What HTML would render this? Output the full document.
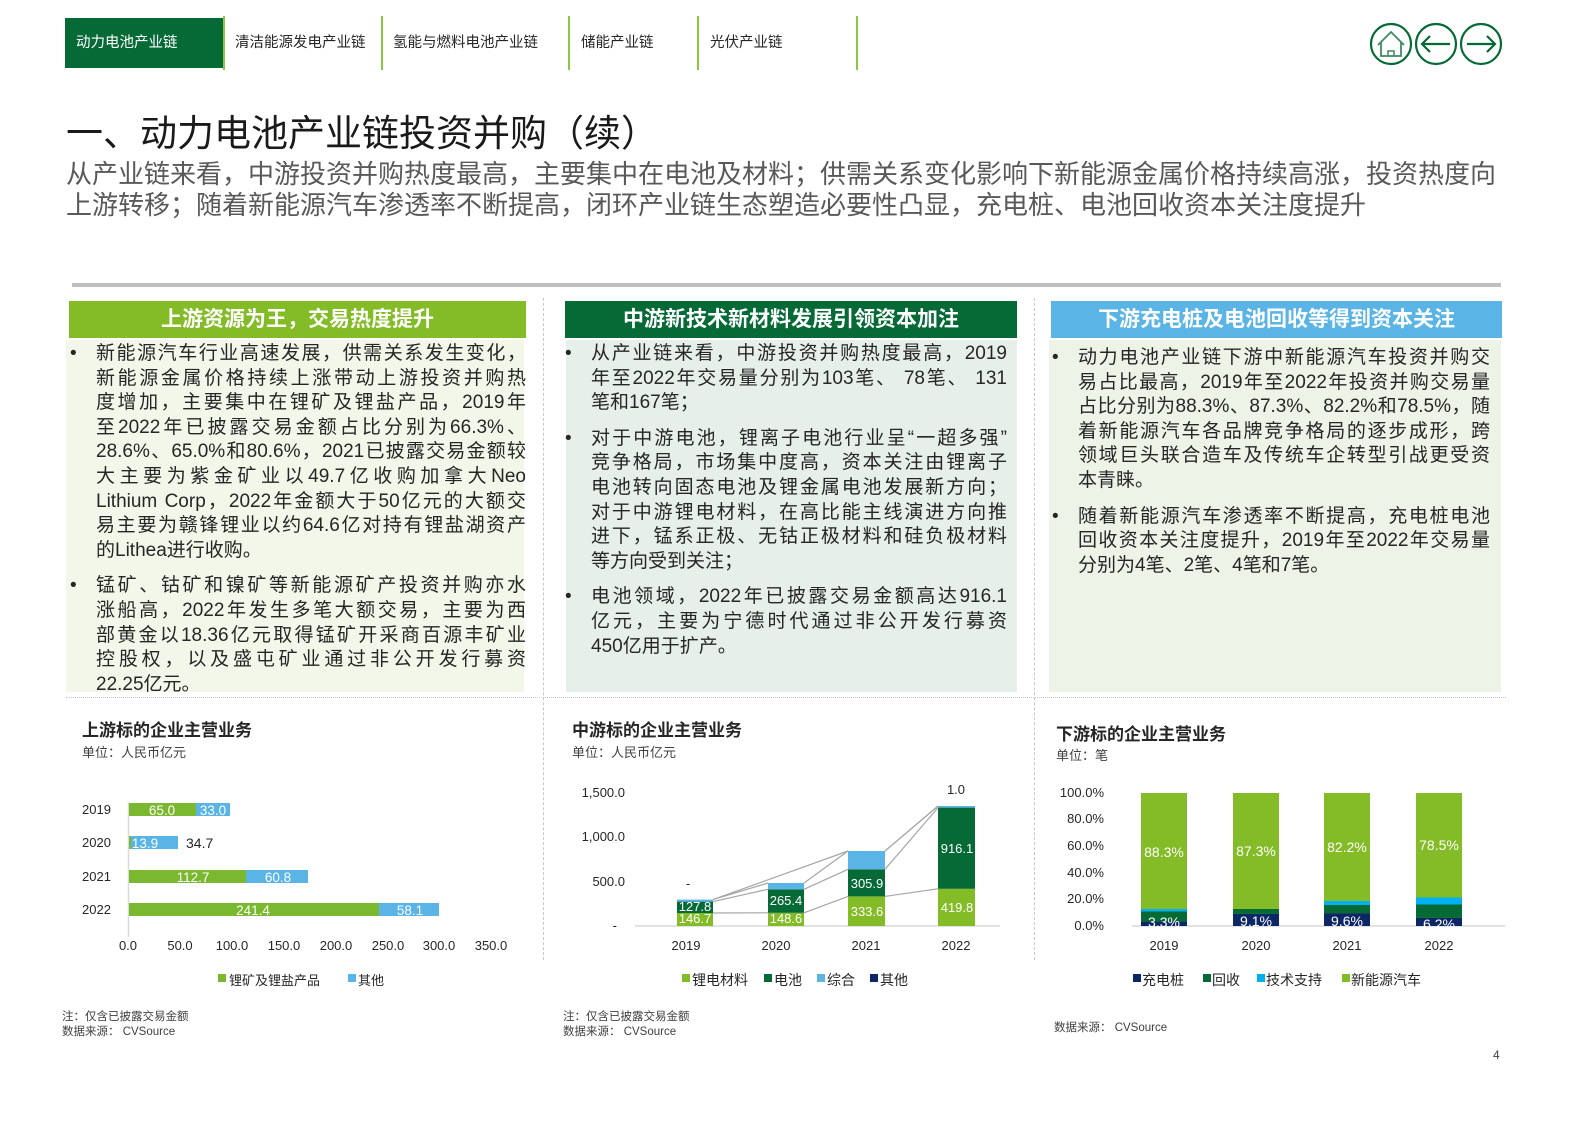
<!DOCTYPE html>
<html><head><meta charset="utf-8">
<style>
*{margin:0;padding:0;box-sizing:border-box}
body{width:1587px;height:1122px;background:#fff;position:relative;overflow:hidden;font-family:"Liberation Sans","Noto Sans CJK SC",sans-serif;color:#262626}
.abs{position:absolute}
.tab{position:absolute;top:18px;height:50px;line-height:50px;font-size:14.5px;color:#262626;padding-left:11px}
.sep{position:absolute;top:16px;height:54px;width:2px;background:#8dc63f}
.hdr{position:absolute;top:301px;height:37px;line-height:37px;color:#fff;font-size:21px;font-weight:bold;text-align:center}
.panel{position:absolute;top:340px;height:352px}
.txt{position:absolute;font-size:19px;line-height:24.6px;color:#262626}
.txt div{text-align:justify;text-align-last:justify;white-space:nowrap}
.txt div.l{text-align-last:left}
.txt .para{margin-bottom:11px;position:relative}
.txt .para::before{content:"•";position:absolute;left:-26px;top:0}
.ct{position:absolute;font-size:17px;font-weight:bold;color:#262626}
.unit{position:absolute;font-size:13px;color:#404040}
.note{position:absolute;font-size:11.5px;color:#404040;line-height:15px}
</style></head><body>

<div class="abs" style="left:65px;top:18px;width:158px;height:50px;background:#066a37"></div>
<div class="tab" style="left:65px;color:#fff">动力电池产业链</div>
<div class="tab" style="left:224px">清洁能源发电产业链</div>
<div class="tab" style="left:382px">氢能与燃料电池产业链</div>
<div class="tab" style="left:570px">储能产业链</div>
<div class="tab" style="left:699px">光伏产业链</div>
<div class="sep" style="left:223px"></div>
<div class="sep" style="left:381px"></div>
<div class="sep" style="left:568px"></div>
<div class="sep" style="left:697px"></div>
<div class="sep" style="left:856px"></div>

<svg class="abs" style="left:1366px;top:19px" width="140" height="50" viewBox="0 0 140 50">
<g fill="none" stroke="#066a37" stroke-width="2.2">
<circle cx="25" cy="25" r="20"/><circle cx="70" cy="25" r="20"/><circle cx="115" cy="25" r="20"/>
<path d="M12 26 L25 13 L38 26 M15 23 V37 H35 V23" stroke="#3f8a60" stroke-width="1.8"/>
<path d="M22 37 V32 H28 V37" stroke="#3f8a60" stroke-width="1.5"/>
<path d="M56 25 H84 M64 17 L56 25 L64 33"/>
<path d="M101 25 H129 M121 17 L129 25 L121 33"/>
</g></svg>

<div class="abs" style="left:66px;top:103px;font-size:37px;color:#1a1a1a">一、动力电池产业链投资并购（续）</div>
<div class="abs" style="left:66px;top:159px;font-size:26px;line-height:31px;color:#595959;white-space:nowrap">从产业链来看，中游投资并购热度最高，主要集中在电池及材料；供需关系变化影响下新能源金属价格持续高涨，投资热度向<br>上游转移；随着新能源汽车渗透率不断提高，闭环产业链生态塑造必要性凸显，充电桩、电池回收资本关注度提升</div>

<div class="abs" style="left:72px;top:283px;width:1429px;height:4px;background:#bfbfbf"></div>

<div class="abs" style="left:543px;top:298px;height:662px;border-left:1.5px dashed #c8c8c8"></div>
<div class="abs" style="left:1034px;top:298px;height:662px;border-left:1.5px dashed #c8c8c8"></div>
<div class="abs" style="left:66px;top:697px;width:1440px;border-top:1px dotted #c8c8c8"></div>

<div class="hdr" style="left:69px;width:457px;background:#84bc27">上游资源为王，交易热度提升</div>
<div class="hdr" style="left:565px;width:452px;background:#066a37">中游新技术新材料发展引领资本加注</div>
<div class="hdr" style="left:1051px;width:451px;background:#5ab4e5">下游充电桩及电池回收等得到资本关注</div>

<div class="panel" style="left:66px;width:458px;background:#f2f7ea"></div>
<div class="panel" style="left:566px;width:451px;background:#e6efe9"></div>
<div class="panel" style="left:1049px;width:452px;background:#eef3e8"></div>

<div class="txt" style="left:96px;top:342px;width:430px">
<div class="para"><div>新能源汽车行业高速发展，供需关系发生变化，</div><div>新能源金属价格持续上涨带动上游投资并购热</div><div>度增加，主要集中在锂矿及锂盐产品，2019年</div><div>至2022年已披露交易金额占比分别为66.3%、</div><div>28.6%、65.0%和80.6%，2021已披露交易金额较</div><div>大主要为紫金矿业以49.7亿收购加拿大Neo</div><div>Lithium Corp，2022年金额大于50亿元的大额交</div><div>易主要为赣锋锂业以约64.6亿对持有锂盐湖资产</div><div class="l">的Lithea进行收购。</div></div>
<div class="para"><div>锰矿、钴矿和镍矿等新能源矿产投资并购亦水</div><div>涨船高，2022年发生多笔大额交易，主要为西</div><div>部黄金以18.36亿元取得锰矿开采商百源丰矿业</div><div>控股权，以及盛屯矿业通过非公开发行募资</div><div class="l">22.25亿元。</div></div>
</div>

<div class="txt" style="left:591px;top:342px;width:416px">
<div class="para"><div>从产业链来看，中游投资并购热度最高，2019</div><div>年至2022年交易量分别为103笔、 78笔、 131</div><div class="l">笔和167笔；</div></div>
<div class="para"><div>对于中游电池，锂离子电池行业呈“一超多强”</div><div>竞争格局，市场集中度高，资本关注由锂离子</div><div>电池转向固态电池及锂金属电池发展新方向；</div><div>对于中游锂电材料，在高比能主线演进方向推</div><div>进下，锰系正极、无钴正极材料和硅负极材料</div><div class="l">等方向受到关注；</div></div>
<div class="para"><div>电池领域，2022年已披露交易金额高达916.1</div><div>亿元，主要为宁德时代通过非公开发行募资</div><div class="l">450亿用于扩产。</div></div>
</div>

<div class="txt" style="left:1078px;top:346px;width:412px">
<div class="para"><div>动力电池产业链下游中新能源汽车投资并购交</div><div>易占比最高，2019年至2022年投资并购交易量</div><div>占比分别为88.3%、87.3%、82.2%和78.5%，随</div><div>着新能源汽车各品牌竞争格局的逐步成形，跨</div><div>领域巨头联合造车及传统车企转型引战更受资</div><div class="l">本青睐。</div></div>
<div class="para"><div>随着新能源汽车渗透率不断提高，充电桩电池</div><div>回收资本关注度提升，2019年至2022年交易量</div><div class="l">分别为4笔、2笔、4笔和7笔。</div></div>
</div>

<!-- left chart -->
<div class="ct" style="left:82px;top:716px">上游标的企业主营业务</div>
<div class="unit" style="left:82px;top:742px">单位：人民币亿元</div>
<svg class="abs" style="left:0;top:780px" width="545" height="220" font-family="Liberation Sans" font-size="13">
<line x1="128.5" y1="22" x2="128.5" y2="157" stroke="#d9d9d9" stroke-width="1.5"/>
<g fill="#262626" font-size="13"><text x="82" y="34">2019</text><text x="82" y="67">2020</text><text x="82" y="101">2021</text><text x="82" y="134">2022</text></g>
<rect x="129" y="23" width="67" height="13" fill="#7ab830"/><rect x="196" y="23" width="34" height="13" fill="#5ab4e5"/>
<rect x="129" y="56" width="14" height="13" fill="#7ab830"/><rect x="131" y="56" width="47" height="13" fill="#5ab4e5"/>
<rect x="129" y="90" width="117" height="13" fill="#7ab830"/><rect x="246" y="90" width="62" height="13" fill="#5ab4e5"/>
<rect x="129" y="123" width="250" height="13" fill="#7ab830"/><rect x="379" y="123" width="60" height="13" fill="#5ab4e5"/>
<g fill="#fff" font-size="13.5" text-anchor="middle"><text x="162" y="35">65.0</text><text x="213" y="35">33.0</text><text x="145" y="68">13.9</text><text x="193" y="102">112.7</text><text x="278" y="102">60.8</text><text x="253" y="135">241.4</text><text x="410" y="135">58.1</text></g>
<text x="186" y="68" fill="#262626" font-size="14">34.7</text>
<g fill="#262626" text-anchor="middle"><text x="128" y="170">0.0</text><text x="180" y="170">50.0</text><text x="232" y="170">100.0</text><text x="284" y="170">150.0</text><text x="336" y="170">200.0</text><text x="388" y="170">250.0</text><text x="439" y="170">300.0</text><text x="491" y="170">350.0</text></g>
<rect x="218" y="194" width="8" height="8" fill="#7ab830"/><text x="229" y="205" fill="#262626" font-family="Liberation Sans,Noto Sans CJK SC">锂矿及锂盐产品</text>
<rect x="348" y="194" width="8" height="8" fill="#5ab4e5"/><text x="358" y="205" fill="#262626" font-family="Liberation Sans,Noto Sans CJK SC">其他</text>
</svg>
<div class="note" style="left:62px;top:1010px">注：仅含已披露交易金额<br>数据来源： CVSource</div>

<!-- middle chart -->
<div class="ct" style="left:572px;top:716px">中游标的企业主营业务</div>
<div class="unit" style="left:572px;top:742px">单位：人民币亿元</div>
<svg class="abs" style="left:545px;top:770px" width="490" height="230" font-family="Liberation Sans" font-size="13">
<g fill="#262626" text-anchor="end"><text x="80" y="27">1,500.0</text><text x="80" y="71">1,000.0</text><text x="80" y="116">500.0</text><text x="72" y="160">-</text></g>
<line x1="90" y1="156" x2="455" y2="156" stroke="#d9d9d9" stroke-width="1.5"/>
<rect x="132" y="143" width="36" height="13" fill="#84bc27"/><rect x="132" y="131.6" width="36" height="11.4" fill="#066a37"/><rect x="132" y="129.6" width="36" height="2" fill="#5ab4e5"/>
<rect x="223" y="142.8" width="36" height="13.2" fill="#84bc27"/><rect x="223" y="119.3" width="36" height="23.5" fill="#066a37"/><rect x="223" y="113" width="36" height="6.3" fill="#5ab4e5"/>
<rect x="303" y="126.4" width="37" height="29.6" fill="#84bc27"/><rect x="303" y="99.3" width="37" height="27.1" fill="#066a37"/><rect x="303" y="81" width="37" height="18.3" fill="#5ab4e5"/>
<rect x="393" y="118.8" width="37" height="37.2" fill="#84bc27"/><rect x="393" y="37.6" width="37" height="81.2" fill="#066a37"/><rect x="393" y="36" width="37" height="1.6" fill="#5ab4e5"/>
<g stroke="#a6a6a6" stroke-width="1.2" fill="none">
<path d="M168 143 L223 142.8 M259 142.8 L303 126.4 M340 126.4 L393 118.8"/>
<path d="M168 131.6 L223 119.3 M259 119.3 L303 99.3 M340 99.3 L393 37.6"/>
<path d="M168 129.6 L223 113 M259 113 L303 81 M340 81 L393 36"/>
<path d="M168 129.6 L303 81 M340 81 L393 36"/>
</g>
<g fill="#fff" font-size="13" text-anchor="middle"><text x="150" y="153">146.7</text><text x="150" y="141">127.8</text><text x="241" y="153">148.6</text><text x="241" y="135">265.4</text><text x="322" y="146">333.6</text><text x="322" y="118">305.9</text><text x="412" y="142">419.8</text><text x="412" y="83">916.1</text></g>
<g fill="#262626" text-anchor="middle"><text x="143" y="118">-</text><text x="411" y="24">1.0</text>
<text x="141" y="180">2019</text><text x="231" y="180">2020</text><text x="321" y="180">2021</text><text x="411" y="180">2022</text></g>
<g font-family="Liberation Sans,Noto Sans CJK SC" fill="#262626" font-size="14">
<rect x="137" y="204" width="8" height="8" fill="#84bc27"/><text x="147" y="215">锂电材料</text>
<rect x="219" y="204" width="8" height="8" fill="#066a37"/><text x="229" y="215">电池</text>
<rect x="272" y="204" width="8" height="8" fill="#5ab4e5"/><text x="282" y="215">综合</text>
<rect x="325" y="204" width="8" height="8" fill="#0d2766"/><text x="335" y="215">其他</text></g>
</svg>
<div class="note" style="left:563px;top:1010px">注：仅含已披露交易金额<br>数据来源： CVSource</div>

<!-- right chart -->
<div class="ct" style="left:1056px;top:720px">下游标的企业主营业务</div>
<div class="unit" style="left:1056px;top:745px">单位：笔</div>
<svg class="abs" style="left:1040px;top:770px" width="470" height="230" font-family="Liberation Sans" font-size="13">
<g fill="#262626" text-anchor="end"><text x="64" y="27">100.0%</text><text x="64" y="53">80.0%</text><text x="64" y="80">60.0%</text><text x="64" y="107">40.0%</text><text x="64" y="133">20.0%</text><text x="64" y="160">0.0%</text></g>
<line x1="92" y1="156" x2="465" y2="156" stroke="#d9d9d9" stroke-width="1.5"/>
<rect x="101" y="23" width="46" height="133" fill="#84bc27"/>
<rect x="101" y="151.6" width="46" height="4.4" fill="#0d2766"/><rect x="101" y="141.5" width="46" height="10" fill="#066a37"/><rect x="101" y="139" width="46" height="2.5" fill="#00b0f0"/>
<rect x="193" y="23" width="46" height="133" fill="#84bc27"/>
<rect x="193" y="143.9" width="46" height="12.1" fill="#0d2766"/><rect x="193" y="139" width="46" height="4.9" fill="#066a37"/>
<rect x="284" y="23" width="46" height="133" fill="#84bc27"/>
<rect x="284" y="143.2" width="46" height="12.8" fill="#0d2766"/><rect x="284" y="135" width="46" height="8.2" fill="#066a37"/><rect x="284" y="131" width="46" height="4" fill="#00b0f0"/>
<rect x="376" y="23" width="46" height="133" fill="#84bc27"/>
<rect x="376" y="147.8" width="46" height="8.2" fill="#0d2766"/><rect x="376" y="134.5" width="46" height="13.3" fill="#066a37"/><rect x="376" y="127.5" width="46" height="7" fill="#00b0f0"/>
<g fill="#fff" font-size="14" text-anchor="middle"><text x="124" y="87">88.3%</text><text x="216" y="86">87.3%</text><text x="307" y="82">82.2%</text><text x="399" y="80">78.5%</text>
<text x="124" y="157">3.3%</text><text x="216" y="156">9.1%</text><text x="307" y="156">9.6%</text><text x="399" y="159">6.2%</text></g>
<g fill="#262626" text-anchor="middle"><text x="124" y="180">2019</text><text x="216" y="180">2020</text><text x="307" y="180">2021</text><text x="399" y="180">2022</text></g>
<g font-family="Liberation Sans,Noto Sans CJK SC" fill="#262626" font-size="14">
<rect x="93" y="204" width="8" height="8" fill="#0d2766"/><text x="102" y="215">充电桩</text>
<rect x="163" y="204" width="8" height="8" fill="#066a37"/><text x="172" y="215">回收</text>
<rect x="217" y="204" width="8" height="8" fill="#00b0f0"/><text x="226" y="215">技术支持</text>
<rect x="302" y="204" width="8" height="8" fill="#84bc27"/><text x="311" y="215">新能源汽车</text></g>
</svg>
<div class="note" style="left:1054px;top:1021px">数据来源： CVSource</div>

<div class="abs" style="left:1493px;top:1048px;font-size:12px;color:#404040">4</div>
</body></html>
